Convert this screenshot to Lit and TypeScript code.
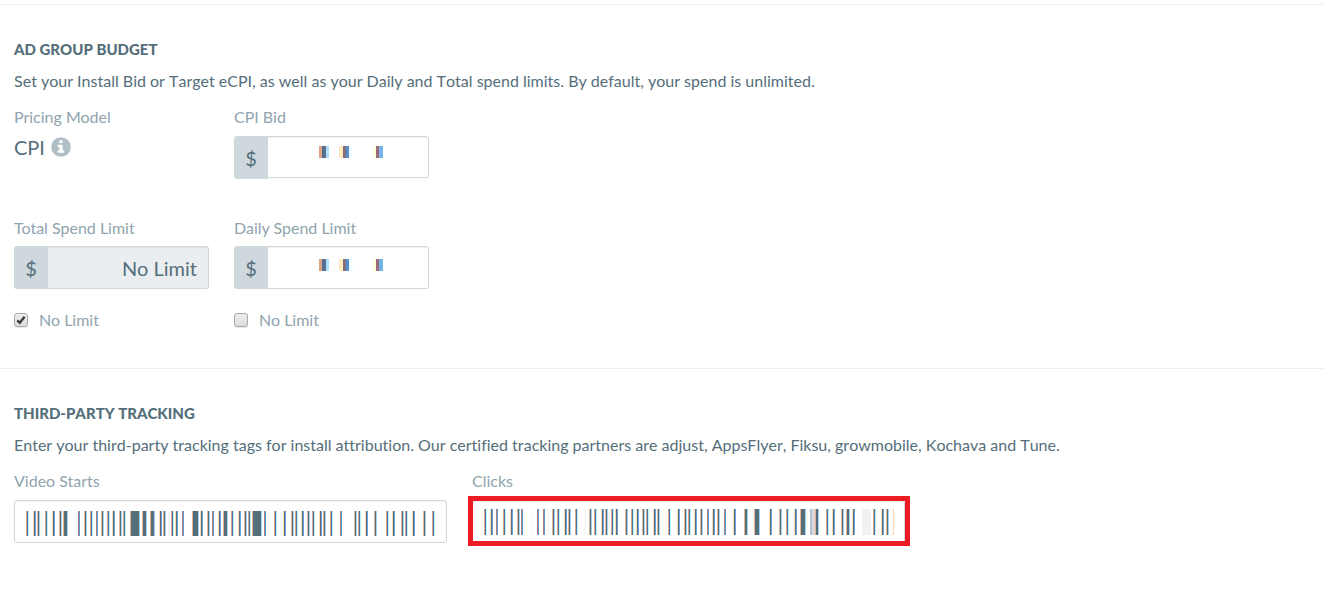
import { LitElement, html, svg, css } from "lit";
import { customElement, property } from "lit/decorators.js";

type Bar = [number, number?, string?];

// Fringe colours on the left and right of each stripe, with the core between.
const TINTS = [
  ["#dca583", "#4a74a4", "#b5f3f8"],
  ["#ffdcae", "#5d6c82", "#62a5e0"],
  ["#e9b48e", "#546f7a", "#9fd4fa"],
];

const STARTS: Bar[] = [
  [26], [33], [37], [45], [52], [59], [63, 5], [78, 2], [84], [90], [96, 2], [101], [107], [112],
  [119], [123], [130, 10], [142, 5], [150, 5], [159], [163], [171], [175], [182, 2], [192, 7],
  [200], [207], [212, 2], [218], [223, 5], [231], [238], [244], [248], [252, 10], [264, 2], [274],
  [283], [291], [295], [301], [307], [312], [319], [323], [330], [340, 2], [354], [358], [365],
  [374], [386], [392], [401], [405], [412], [423], [432],
];

const CLICKS: Bar[] = [
  [484], [490], [496, 2], [503], [510], [517], [521, 2], [531, 1, "#f7f4f5"], [537, 2], [543, 2],
  [548, 1, "#f7f4f5"], [552], [557], [564], [568], [575], [584, 2, "#faf7f8"], [589], [594], [601],
  [605], [611], [615], [625], [631], [636], [642], [646], [653], [657], [668], [677], [684], [688],
  [694], [700], [707, 2], [712], [717], [724, 2], [733], [744, 4], [754, 6], [769], [779], [786],
  [794], [800, 6], [810, 2, "#b9c2d3"], [812, 3, "#d9d8e2"], [815, 4], [826], [832], [841], [846, 4], [852],
  [862, 9, "#f3f1f2"], [873], [881], [886], [893, 1, "#ffd5a8"],
];

@customElement("masked-value")
export class MaskedValue extends LitElement {
  @property({ attribute: false }) bars: Bar[] = [];
  @property({ type: Number }) origin = 0;
  @property({ type: Number }) height = 25;

  static styles = css`
    :host { display: block; line-height: 0; pointer-events: none; }
    svg { display: block; }
  `;

  render() {
    return html`<svg width="411" height=${this.height} aria-hidden="true" shape-rendering="crispEdges">
      ${this.bars.map(([start, width = 3, fill], i) => {
        const x = start - this.origin;
        const h = this.height;
        if (fill) return svg`<rect x=${x} width=${width} height=${h} fill=${fill}/>`;
        const [left, core, right] = TINTS[width > 3 ? 2 : i % 3];
        if (width === 2)
          return svg`<rect x=${x} width="1" height=${h} fill="#b07f80"/><rect x=${x + 1} width="1" height=${h} fill="#5b9bd5"/>`;
        return svg`<rect x=${x} width="1" height=${h} fill=${left}/><rect x=${x + 1} width=${width - 2} height=${h} fill=${core}/><rect x=${x + width - 1} width="1" height=${h} fill=${right}/>`;
      })}
    </svg>`;
  }
}

@customElement("money-field")
export class MoneyField extends LitElement {
  @property() label = "";
  @property() value = "";
  @property({ type: Boolean }) locked = false;
  @property({ type: Boolean }) raised = false;

  static styles = css`
    :host { display: block; }
    label { display: block; line-height: 20px; margin-bottom: 8px; color: #90a4ae; }
    :host([raised]) label { margin-bottom: 9px; }
    .group { display: grid; grid-template-columns: 34px minmax(0, 1fr); height: 43px; }
    .sign {
      display: flex; align-items: center; justify-content: center;
      background: #cfd8dd; border-radius: 3px 0 0 3px; font-size: 20px; color: #546e7a;
    }
    input {
      grid-area: 1 / 2; box-sizing: border-box; width: 100%; height: 100%; margin: 0;
      padding: 0 11px; border: 1px solid #cfd8dd; border-left: 0; border-radius: 0 3px 3px 0;
      box-shadow: inset 0 1px 1px #0000000f; background: #fff; color: #546e7a;
      font: 20px Lato, sans-serif; text-align: right; outline: none;
    }
    input:disabled { background: #eaeef0; opacity: 1; }
    .mask { grid-area: 1 / 2; margin: 13px 0 0 51px; z-index: 1; pointer-events: none; display: block; }
    .raised .mask { margin-top: 10px; }
    .raised input { height: 42px; }
  `;

  render() {
    return html`
      <label for="amount">${this.label}</label>
      <div class="group ${this.raised ? "raised" : ""}">
        <span class="sign">$</span>
        <input id="amount" type="text" .value=${this.value} ?disabled=${this.locked}>
        ${this.locked ? "" : html`<svg class="mask" width="65" height="12" aria-hidden="true" shape-rendering="crispEdges">
          <path fill="#dba583" d="M0 0h3v12H0z"/><path fill="#58708f" d="M3 0h4v12H3z"/><path fill="#addfff" d="M7 0h3v12H7z"/>
          <path fill="#ffebbe" d="M20 0h4v12h-4z"/><path fill="#82707f" d="M24 0h3v12h-3z"/><path fill="#588dcc" d="M27 0h3v12h-3z"/><path fill="#f0ffff" d="M30 0h4v12h-4z"/>
          <path fill="#ffffdc" d="M54 0h3v12h-3z"/><path fill="#9b6c7e" d="M57 0h3v12h-3z"/><path fill="#75b3e8" d="M60 0h4v12h-4z"/>
        </svg>`}
      </div>`;
  }
}

@customElement("app-root")
export class AppRoot extends LitElement {
  static styles = css`
    :host {
      display: block; background: #fff; color: #546e7a;
      font: 16px/20px Lato, sans-serif; font-variant-ligatures: none;
      padding: 4px 0 44px;
    }
    section { border-top: 1px solid #eceff1; padding: 34px 14px 0; }
    h2, p { font-kerning: none; }
    h2 { margin: 0 0 12px; font-size: 15px; line-height: 20px; font-weight: 900; text-transform: uppercase; }
    p { margin: 0 0 16px; line-height: 20px; }
    .budget { display: grid; grid-template-columns: repeat(6, minmax(0, 1fr)); column-gap: 25px; padding-bottom: 38px; }
    .first { grid-column-start: 1; }
    .limits { margin-top: 39px; }
    .caption { color: #90a4ae; line-height: 20px; }
    .model { display: flex; align-items: center; gap: 6px; margin-top: 8px; font-size: 20px; line-height: 24px; }
    .info { display: block; width: 20px; height: 20px; }
    .tick { display: flex; align-items: center; gap: 11px; margin-top: 21px; color: #90a4ae; line-height: 20px; }
    .tick input {
      appearance: none; box-sizing: border-box; width: 14px; height: 14px; margin: 0;
      border: 1px solid #a9a9a9; border-radius: 3px;
      background: linear-gradient(#eee, #dcdcdc); box-shadow: 0 1px 1px #0000001a;
    }
    .tick span { display: grid; }
    .tick span > * { grid-area: 1 / 1; }
    .tick svg { display: none; pointer-events: none; z-index: 1; }
    .tick input:checked + svg { display: block; }
    .tracking { display: grid; grid-template-columns: repeat(2, minmax(0, 1fr)); column-gap: 25px; max-width: 891px; }
    .tracking label { display: block; color: #90a4ae; line-height: 20px; margin-bottom: 9px; }
    .box { position: relative; display: grid; height: 43px; }
    .box > input {
      grid-area: 1 / 1; box-sizing: border-box; width: 100%; height: 100%; margin: 0; padding: 0 11px;
      border: 1px solid #cfd8dd; border-radius: 3px; box-shadow: inset 0 1px 1px #0000000f;
      background: #fff; color: #546e7a; font: 20px Lato, sans-serif; outline: none;
    }
    masked-value { grid-area: 1 / 1; margin: 11px 11px 0; z-index: 1; overflow: hidden; }
    .marked masked-value { margin-top: 9px; }
    .marked::after {
      content: ""; position: absolute; inset: -4px -5px -3px -4px; z-index: 2;
      border: 5px solid #ed1c24; pointer-events: none;
    }
  `;

  private tick(label: string, checked: boolean) {
    return html`<label class="tick">
      <span>
        <input type="checkbox" .checked=${checked}>
        <svg width="14" height="14" viewBox="0 0 14 14" aria-hidden="true"><path d="M3.3 7.3 5.8 9.8 10.6 3.8" fill="none" stroke="#3c3c3c" stroke-width="2.4"/></svg>
      </span>
      ${label}
    </label>`;
  }

  render() {
    return html`
      <section>
        <h2>Ad Group Budget</h2>
        <p>Set your Install Bid or Target eCPI, as well as your Daily and Total spend limits. By default, your spend is unlimited.</p>
        <div class="budget">
          <div class="first">
            <div class="caption">Pricing Model</div>
            <div class="model">CPI
              <svg class="info" viewBox="0 0 20 20" aria-hidden="true">
                <circle cx="10" cy="10" r="9.8" fill="#b0bec5"/>
                <path fill="#fff" d="M8.3 3.2h3.3v2.9H8.3zM6.6 7.7h5v5.6h1.6v2.4H6.6v-2.4h1.7v-3.2H6.6z"/>
              </svg>
            </div>
          </div>
          <money-field label="CPI Bid" raised></money-field>
          <div class="first limits">
            <money-field label="Total Spend Limit" value="No Limit" locked></money-field>
            ${this.tick("No Limit", true)}
          </div>
          <div class="limits">
            <money-field label="Daily Spend Limit"></money-field>
            ${this.tick("No Limit", false)}
          </div>
        </div>
      </section>
      <section>
        <h2>Third-Party Tracking</h2>
        <p>Enter your third-party tracking tags for install attribution. Our certified tracking partners are adjust, AppsFlyer, Fiksu, growmobile, Kochava and Tune.</p>
        <div class="tracking">
          <div>
            <label for="starts">Video Starts</label>
            <div class="box">
              <input id="starts" type="text">
              <masked-value .bars=${STARTS} origin="25" height="25"></masked-value>
            </div>
          </div>
          <div>
            <label for="clicks">Clicks</label>
            <div class="box marked">
              <input id="clicks" type="text">
              <masked-value .bars=${CLICKS} origin="483" height="26"></masked-value>
            </div>
          </div>
        </div>
      </section>`;
  }
}
